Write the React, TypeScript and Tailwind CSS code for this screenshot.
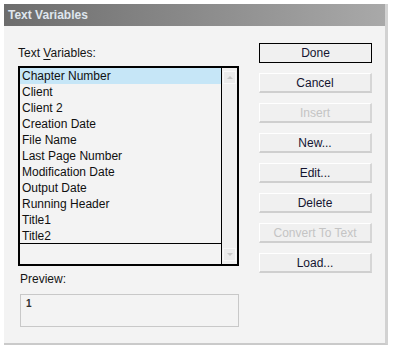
const items = [
  'Chapter Number',
  'Client',
  'Client 2',
  'Creation Date',
  'File Name',
  'Last Page Number',
  'Modification Date',
  'Output Date',
  'Running Header',
  'Title1',
  'Title2',
];

const buttons: { label: string; disabled?: boolean; primary?: boolean }[] = [
  { label: 'Done', primary: true },
  { label: 'Cancel' },
  { label: 'Insert', disabled: true },
  { label: 'New...' },
  { label: 'Edit...' },
  { label: 'Delete' },
  { label: 'Convert To Text', disabled: true },
  { label: 'Load...' },
];

function DialogButton({ label, disabled, primary }: { label: string; disabled?: boolean; primary?: boolean }) {
  if (primary) {
    return (
      <div className="h-[20px] w-[113px] border border-black bg-[#f0f0f0] flex items-center justify-center text-[12px] text-[#141430]">
        {label}
      </div>
    );
  }
  return (
    <div
      className={`h-[20px] w-[113px] border-t border-l border-t-white border-l-white border-b-2 border-r-2 border-b-[#cfcfcf] border-r-[#d6d6d6] bg-[#f0f0f0] flex items-center justify-center text-[12px] ${
        disabled ? 'text-[#c4c4c4]' : 'text-[#141430]'
      }`}
    >
      {label}
    </div>
  );
}

export default function App() {
  return (
    <div className="w-[394px] h-[350px] bg-white pt-[4px] pl-[4px]" style={{ fontFamily: '"Liberation Sans", Arial, sans-serif' }}>
      <div className="w-[384px] h-[341px] bg-[#f3f3f3] border-r-[3px] border-b-[2px] border-r-[#d2d2d2] border-b-[#cacaca] flex flex-col">
        {/* Title bar */}
        <div className="h-[22px] bg-gradient-to-r from-[#6d6d6d] to-[#a9a9a9] flex items-center pl-[4px] text-[12px] font-bold text-[#dfe6ee]">
          Text Variables
        </div>

        <div className="flex">
          {/* Left column */}
          <div className="pl-[14px] pt-[19px] flex flex-col">
            <div className="h-[16px] leading-[16px] text-[12px] text-[#141414]">
              Text <span className="underline underline-offset-2">V</span>ariables:
            </div>

            <div className="mt-[5px] w-[221px] h-[200px] border-2 border-black bg-[#f3f3f3] flex">
              <div className="flex-1 flex flex-col">
                <div className="h-[176px] border-b border-black">
                  {items.map((item, i) => (
                    <div
                      key={item}
                      className={`h-[16px] leading-[16px] pl-[2px] text-[12px] text-[#101010] ${i === 0 ? 'bg-[#c6e6f7]' : ''}`}
                    >
                      {item}
                    </div>
                  ))}
                </div>
              </div>
              {/* Scrollbar */}
              <div className="w-[16px] border-l border-black bg-[#f0f0f0] flex flex-col justify-between items-center py-[3px]">
                <div className="w-[13px] h-[13px] bg-[#ebebeb] border border-[#f8f8f8] flex items-center justify-center">
                  <div className="w-0 h-0 border-l-[3px] border-r-[3px] border-b-[3px] border-l-transparent border-r-transparent border-b-[#c8c8c8]" />
                </div>
                <div className="w-[13px] h-[13px] bg-[#ebebeb] border border-[#f8f8f8] flex items-center justify-center">
                  <div className="w-0 h-0 border-l-[3px] border-r-[3px] border-t-[3px] border-l-transparent border-r-transparent border-t-[#c8c8c8]" />
                </div>
              </div>
            </div>

            <div className="mt-[5px] pl-[2px] h-[16px] leading-[16px] text-[12px] text-[#141414]">Preview:</div>

            <div className="mt-[7px] ml-[2px] w-[219px] h-[33px] border border-[#c8c8c8] bg-[#f3f3f3] pl-[5px] pt-[3px] text-[10px] leading-[12px] font-bold text-[#303030]">
              1
            </div>
          </div>

          {/* Right column */}
          <div className="pl-[20px] pt-[17px] flex flex-col gap-[10px]">
            {buttons.map((b) => (
              <DialogButton key={b.label} {...b} />
            ))}
          </div>
        </div>
      </div>
    </div>
  );
}
